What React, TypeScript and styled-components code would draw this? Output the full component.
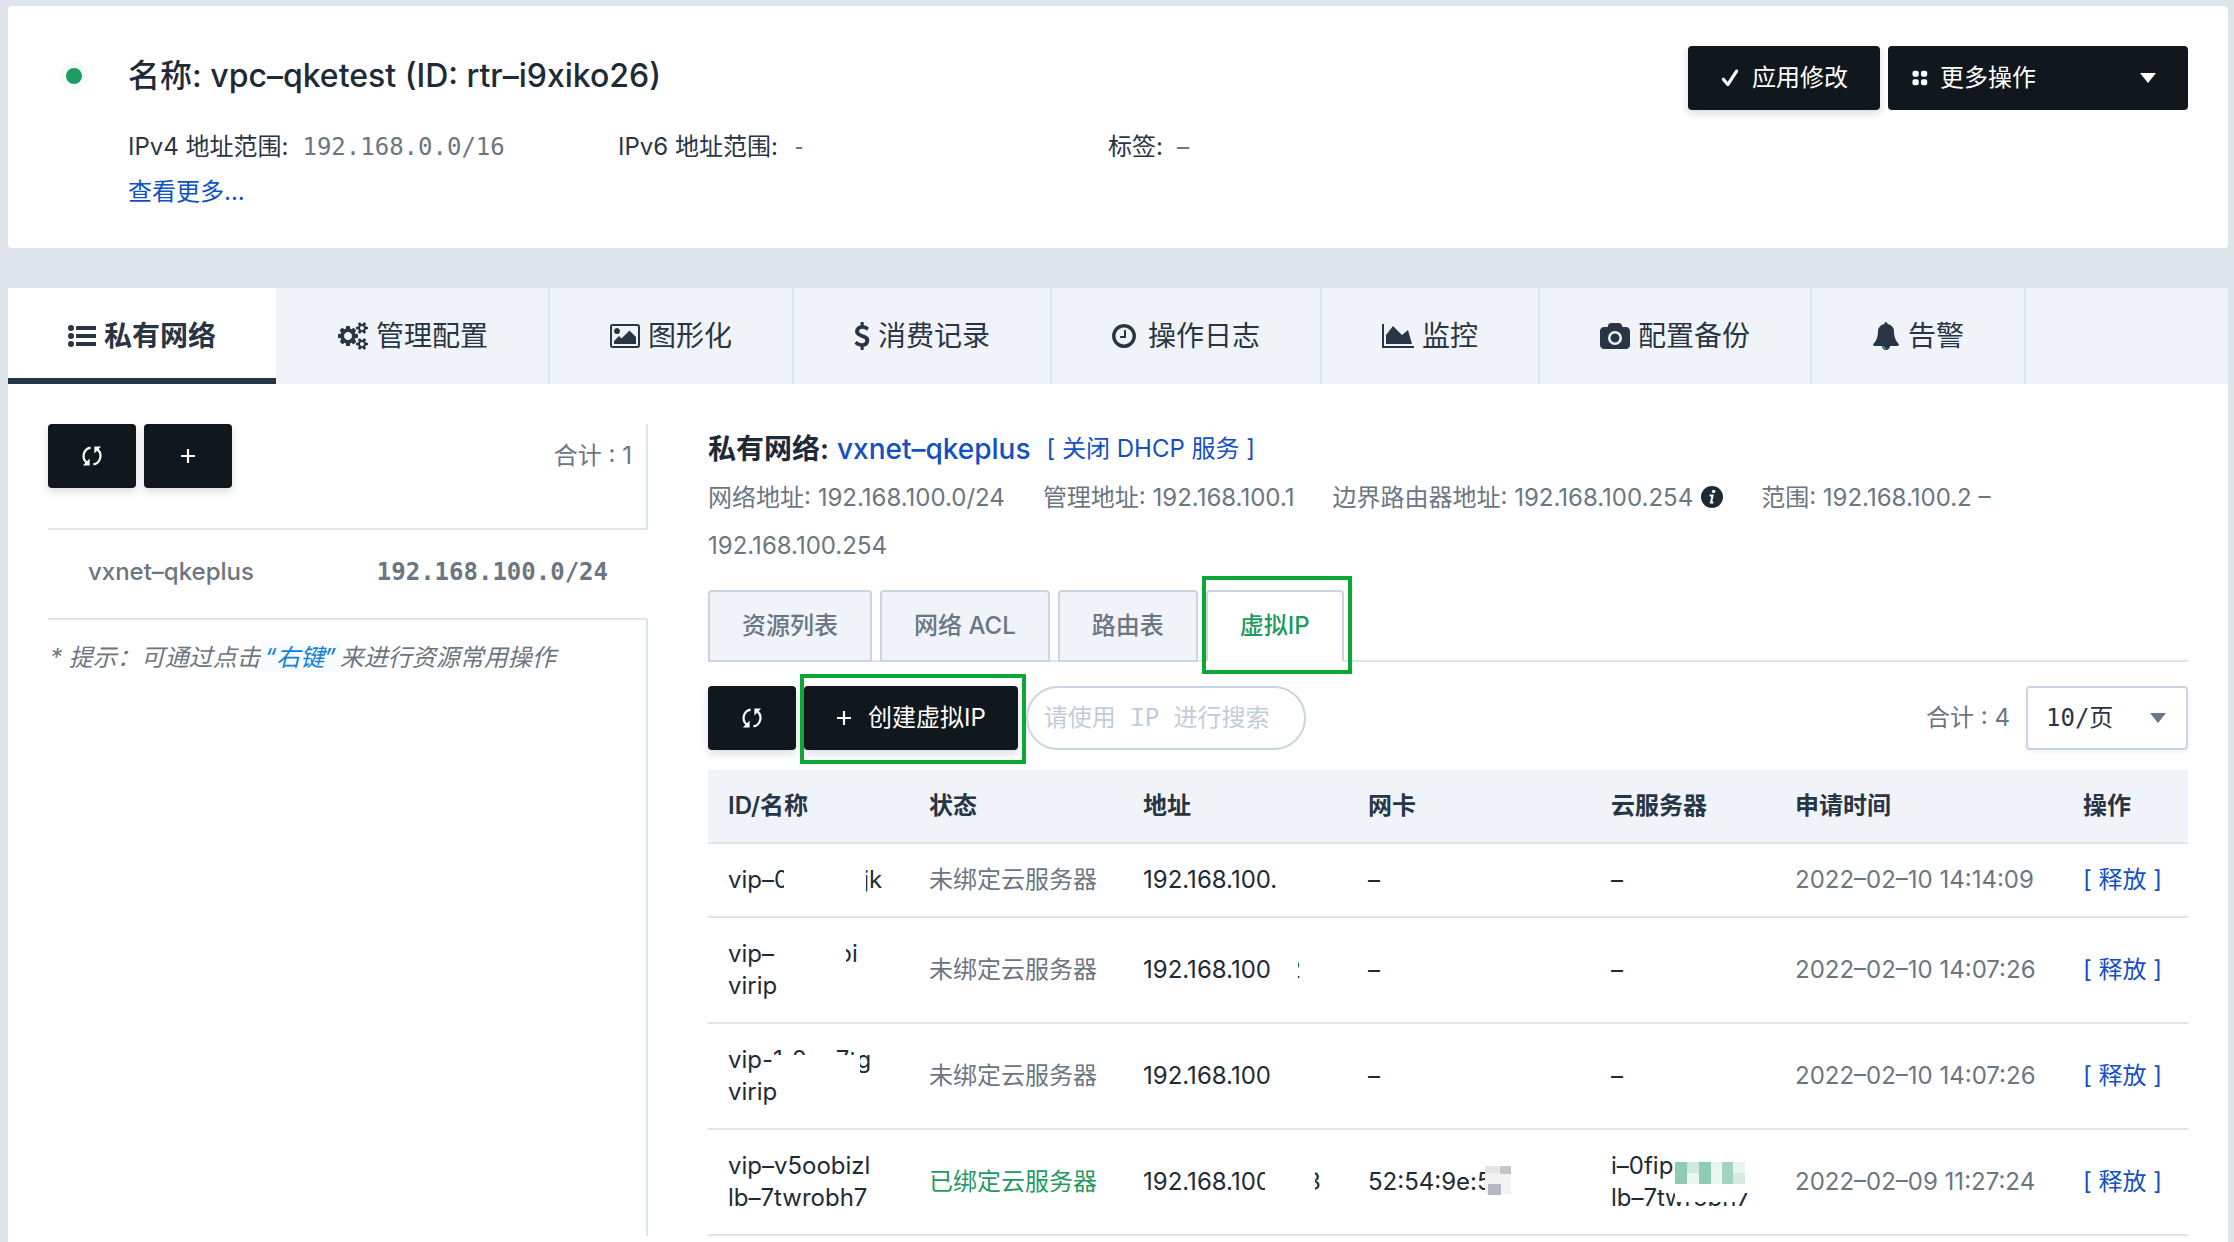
import React from "react";
import styled, { createGlobalStyle, css } from "styled-components";

const sans = `Inter, "Noto Sans CJK SC", sans-serif`;
const mono = `"DejaVu Sans Mono", "Noto Sans CJK SC", monospace`;

const color = {
  page: "#dde4eb",
  panel: "#ffffff",
  soft: "#f0f4f8",
  line: "#dfe5ec",
  edge: "#cbd5e2",
  ink: "#283544",
  strong: "#1e2b37",
  muted: "#6b7683",
  dark: "#10181d",
  link: "#1350c3",
  hint: "#1681d1",
  green: "#1f9a62",
  mark: "#0ba838",
};

const GlobalStyle = createGlobalStyle`
  *, *::before, *::after { box-sizing: border-box; }
  body {
    margin: 0;
    background: ${color.page};
    color: ${color.ink};
    font-family: ${sans};
    font-size: 24px;
    line-height: 32px;
  }
  button, input, select { font: inherit; color: inherit; }
  a { color: ${color.link}; text-decoration: none; }
`;

/* ---------- icons ---------- */

const Icon = styled.svg<{ $w: number; $h?: number }>`
  flex: none;
  display: block;
  width: ${(p) => p.$w}px;
  height: ${(p) => p.$h ?? p.$w}px;
  fill: currentColor;
`;

const ListIcon = () => (
  <Icon $w={28} viewBox="0 0 1792 1792" aria-hidden="true">
    {[384, 896, 1408].map((y) => (
      <g key={y}>
        <circle cx="192" cy={y} r="192" />
        <rect x="512" y={y - 128} width="1280" height="256" rx="32" />
      </g>
    ))}
  </Icon>
);

const CogsIcon = () => (
  <Icon $w={30} $h={28} viewBox="-64 0 1920 1792" aria-hidden="true">
    <path d="M832 896q0-106-75-181t-181-75-181 75-75 181 75 181 181 75 181-75 75-181zm768 512q0-52-38-90t-90-38-90 38-38 90q0 53 37.5 90.5t90.5 37.5 90.5-37.5 37.5-90.5zm0-1024q0-52-38-90t-90-38-90 38-38 90q0 53 37.5 90.5t90.5 37.5 90.5-37.5 37.5-90.5zm-384 421v185q0 10-7 19.5t-16 10.5l-155 24q-11 35-32 76 34 48 90 115 7 11 7 20 0 12-7 19-23 30-82.5 89.5t-78.5 59.5q-11 0-21-7l-115-90q-37 19-77 31-11 108-23 155-7 24-30 24h-186q-11 0-20-7.5t-10-17.5l-23-153q-34-10-75-31l-118 89q-7 7-20 7-11 0-21-8-144-133-144-160 0-9 7-19 10-14 41-53t47-61q-23-44-35-82l-152-24q-10-1-17-9.5t-7-19.5v-185q0-10 7-19.5t16-10.5l155-24q11-35 32-76-34-48-90-115-7-11-7-20 0-12 7-20 22-30 82-89t79-59q11 0 21 7l115 90q34-18 77-32 11-108 23-154 7-24 30-24h186q11 0 20 7.5t10 17.5l23 153q34 10 75 31l118-89q8-7 20-7 11 0 21 8 144 133 144 160 0 8-7 19-12 16-42 54t-45 60q23 48 34 82l152 23q10 2 17 10.5t7 19.5zm640 533v140q0 16-149 31-12 27-30 52 51 113 51 138 0 4-4 7-122 71-124 71-8 0-46-47t-52-68q-20 2-30 2t-30-2q-14 21-52 68t-46 47q-2 0-124-71-4-3-4-7 0-25 51-138-18-25-30-52-149-15-149-31v-140q0-16 149-31 13-29 30-52-51-113-51-138 0-4 4-7 4-2 35-20t59-34 30-16q8 0 46 46.5t52 67.5q20-2 30-2t30 2q51-71 92-112l6-2q4 0 124 70 4 3 4 7 0 25-51 138 17 23 30 52 149 15 149 31zm0-1024v140q0 16-149 31-12 27-30 52 51 113 51 138 0 4-4 7-122 71-124 71-8 0-46-47t-52-68q-20 2-30 2t-30-2q-14 21-52 68t-46 47q-2 0-124-71-4-3-4-7 0-25 51-138-18-25-30-52-149-15-149-31v-140q0-16 149-31 13-29 30-52-51-113-51-138 0-4 4-7 4-2 35-20t59-34 30-16q8 0 46 46.5t52 67.5q20-2 30-2t30 2q51-71 92-112l6-2q4 0 124 70 4 3 4 7 0 25-51 138 17 23 30 52 149 15 149 31z" />
  </Icon>
);

const PictureIcon = () => (
  <Icon $w={30} $h={28} viewBox="-64 0 1920 1792" aria-hidden="true">
    <path d="M576 576q0 80-56 136t-136 56-136-56-56-136 56-136 136-56 136 56 56 136zm1024 384v448h-1408v-192l320-320 160 160 512-512zm96-704h-1600q-13 0-22.5 9.5t-9.5 22.5v1216q0 13 9.5 22.5t22.5 9.5h1600q13 0 22.5-9.5t9.5-22.5v-1216q0-13-9.5-22.5t-22.5-9.5zm160 32v1216q0 66-47 113t-113 47h-1600q-66 0-113-47t-47-113v-1216q0-66 47-113t113-47h1600q66 0 113 47t47 113z" />
  </Icon>
);

const DollarIcon = () => (
  <Icon $w={16} $h={28} viewBox="384 0 1024 1792" aria-hidden="true">
    <path d="M1362 1185q0 153-99.5 263.5t-258.5 136.5v175q0 14-9 23t-23 9h-135q-13 0-22.5-9.5t-9.5-22.5v-175q-66-9-127.5-31t-101.5-44.5-74-48-46.5-37.5-17.5-18q-17-21-2-41l103-135q7-10 23-12 15-2 24 9l2 2q113 99 243 125 37 8 74 8 81 0 142.5-43t61.5-122q0-28-15-53t-33.5-42-58.5-37.5-66-32-80-32.5q-39-16-61.5-25t-61.5-26.5-62.5-31-56.5-35.5-53.5-42.5-43.5-49-35.5-58-21-66.5-8.5-78q0-138 98-242t255-134v-180q0-13 9.5-22.5t22.5-9.5h135q14 0 23 9t9 23v176q57 6 110.5 23t87 33.5 63.5 37.5 39 29 15 14q17 18 5 38l-81 146q-8 15-23 16-14 3-27-7-3-3-14.5-12t-39-26.5-58.5-32-74.5-26-85.5-11.5q-95 0-155 43t-60 111q0 26 8.5 48t29.5 41.5 39.5 33 56 31 60.5 27 70 27.5q53 20 81 31.5t76 35 75.5 42.5 62 50 53 63.5 31.5 76.5 13 94z" />
  </Icon>
);

const ClockIcon = () => (
  <Icon $w={28} viewBox="128 0 1792 1792" aria-hidden="true">
    <path d="M1024 544v448q0 14-9 23t-23 9h-320q-14 0-23-9t-9-23v-64q0-14 9-23t23-9h224v-352q0-14 9-23t23-9h64q14 0 23 9t9 23zm416 352q0-148-73-273t-198-198-273-73-273 73-198 198-73 273 73 273 198 198 273 73 273-73 198-198 73-273zm224 0q0 209-103 385.5t-279.5 279.5-385.5 103-385.5-103-279.5-279.5-103-385.5 103-385.5 279.5-279.5 385.5-103 385.5 103 279.5 279.5 103 385.5z" />
  </Icon>
);

const ChartIcon = () => (
  <Icon $w={32} $h={28} viewBox="0 0 2048 1792" aria-hidden="true">
    <path d="M2048 1536v128h-2048v-1536h128v1408h1920zM1664 512l256 896h-1664v-576l448-576 576 576z" />
  </Icon>
);

const CameraIcon = () => (
  <Icon $w={30} $h={28} viewBox="0 -64 1920 1792" aria-hidden="true">
    <path d="M960 672q119 0 203.5 84.5t84.5 203.5-84.5 203.5-203.5 84.5-203.5-84.5-84.5-203.5 84.5-203.5 203.5-84.5zm704-416q106 0 181 75t75 181v896q0 106-75 181t-181 75h-1408q-106 0-181-75t-75-181v-896q0-106 75-181t181-75h224l51-136q19-49 69.5-84.5t103.5-35.5h512q53 0 103.5 35.5t69.5 84.5l51 136h224zm-704 1152q185 0 316.5-131.5t131.5-316.5-131.5-316.5-316.5-131.5-316.5 131.5-131.5 316.5 131.5 316.5 316.5 131.5z" />
  </Icon>
);

const BellIcon = () => (
  <Icon $w={28} viewBox="0 0 1792 1792" aria-hidden="true">
    <path d="M912 1696q0-16-16-16-59 0-101.5-42.5t-42.5-101.5q0-16-16-16t-16 16q0 73 51.5 124.5t124.5 51.5q16 0 16-16zm816-288q0 52-38 90t-90 38h-448q0 106-75 181t-181 75-181-75-75-181h-448q-52 0-90-38t-38-90q50-42 91-88t85-119.5 74.5-158.5 50-206 19.5-260q0-152 117-282.5t307-158.5q-8-19-8-39 0-40 28-68t68-28 68 28 28 68q0 20-8 39 190 28 307 158.5t117 282.5q0 139 19.5 260t50 206 74.5 158.5 85 119.5 91 88z" />
  </Icon>
);

const CheckIcon = () => (
  <Icon $w={20} viewBox="0 0 20 20" aria-hidden="true">
    <path
      d="M3.4 11.2 7.8 16.6 16.6 3.2"
      fill="none"
      stroke="currentColor"
      strokeWidth="3.2"
      strokeLinecap="round"
      strokeLinejoin="round"
    />
  </Icon>
);

const DotsIcon = () => (
  <Icon $w={16} viewBox="0 0 16 16" aria-hidden="true">
    <rect x="0.5" y="0.8" width="6.2" height="6" rx="2" />
    <rect x="9" y="0.8" width="6.2" height="6" rx="2" />
    <rect x="0.5" y="9.2" width="6.2" height="6" rx="2" />
    <rect x="9" y="9.2" width="6.2" height="6" rx="2" />
  </Icon>
);

const RefreshIcon = () => (
  <Icon $w={24} viewBox="0 0 24 24" aria-hidden="true">
    <g fill="none" stroke="currentColor" strokeWidth="2.2">
      <path d="M10.6 3.6A8.6 8.6 0 0 0 6.6 18.6" />
      <path d="M13.4 20.4A8.6 8.6 0 0 0 17.4 5.4" />
    </g>
    <path d="M9.6 14.6V21.4H2.9z" />
    <path d="M14.4 9.4V2.6H21.1z" />
  </Icon>
);

const PlusIcon = () => (
  <Icon $w={16} viewBox="0 0 16 16" aria-hidden="true">
    <path d="M6.9 1h2.2v5.9H15v2.2H9.1V15H6.9V9.1H1V6.9h5.9z" />
  </Icon>
);

const CaretIcon = () => (
  <Icon $w={16} $h={10} viewBox="0 0 16 10" aria-hidden="true">
    <path d="M0 0h16L8 10z" />
  </Icon>
);

const InfoIcon = styled(Icon)`
  display: inline-block;
  vertical-align: -2px;
  margin-left: 8px;
  color: ${color.strong};
`;

/* ---------- shared parts ---------- */

const Page = styled.div`
  display: flex;
  flex-direction: column;
  gap: 40px;
  min-height: 100vh;
  padding: 6px 6px 0 8px;
`;

const Button = styled.button<{ $square?: boolean }>`
  position: relative;
  display: inline-flex;
  align-items: center;
  justify-content: center;
  gap: 12px;
  height: 64px;
  padding: 0 ${(p) => (p.$square ? 0 : 32)}px;
  ${(p) => p.$square && "width: 88px;"}
  border: 0;
  border-radius: 4px;
  background: ${color.dark};
  color: #fff;
  white-space: nowrap;
  box-shadow: 0 4px 8px rgba(30, 45, 65, 0.16);
  cursor: pointer;
`;

const marked = css`
  &::after {
    content: "";
    position: absolute;
    border: 4px solid ${color.mark};
    pointer-events: none;
  }
`;

/* ---------- header card ---------- */

const Card = styled.header`
  display: grid;
  grid-template-columns: 16px minmax(0, 1fr) auto;
  column-gap: 46px;
  padding: 40px 40px 34px 58px;
  border-radius: 4px;
  background: ${color.panel};
`;

const StatusDot = styled.span`
  width: 16px;
  height: 16px;
  margin-top: 22px;
  border-radius: 50%;
  background: ${color.green};
  box-shadow: 0 0 0 6px #f3fcf8;
`;

const Title = styled.h1`
  margin: 10px 0 28px;
  color: ${color.strong};
  font-size: 32px;
  font-weight: 500;
  line-height: 40px;
`;

const Actions = styled.div`
  display: flex;
  align-items: flex-start;
  gap: 8px;
`;

const MenuButton = styled(Button)`
  justify-content: flex-start;
  width: 300px;
  padding: 0 32px 0 24px;
  box-shadow: none;

  svg:last-child {
    margin-left: auto;
  }
`;

const Facts = styled.dl`
  display: grid;
  grid-template-columns: repeat(4, minmax(0, 490px));
  grid-column: 2 / -1;
  margin: 0;
  line-height: 46px;
`;

const Fact = styled.div`
  display: flex;
  gap: 14px;

  dt,
  dd {
    margin: 0;
  }
`;

const FactValue = styled.dd<{ $mono?: boolean }>`
  color: ${color.muted};
  ${(p) => p.$mono && `font-family: ${mono};`}
`;

const MoreLink = styled.a`
  grid-column: 2 / -1;
  justify-self: start;
  line-height: 44px;
`;

/* ---------- main tabs ---------- */

const Main = styled.main`
  display: flex;
  flex: 1;
  flex-direction: column;
  background: ${color.panel};
`;

const Tabs = styled.nav`
  display: flex;
  background: ${color.soft};
`;

const Tab = styled.button<{ $active?: boolean }>`
  display: flex;
  align-items: center;
  gap: 8px;
  height: 96px;
  padding: 0 60px;
  border: 0;
  border-right: 2px solid ${color.line};
  background: none;
  font-size: 28px;
  white-space: nowrap;
  cursor: pointer;
  ${(p) =>
    p.$active &&
    css`
      padding-top: 6px;
      margin-right: 2px;
      border-right: 0;
      border-bottom: 6px solid ${color.ink};
      background: ${color.panel};
      font-weight: 600;
    `}
`;

/* ---------- side panel ---------- */

const Columns = styled.div`
  display: flex;
  flex: 1;
  gap: 60px;
  padding: 40px 40px 6px;
`;

const Side = styled.aside`
  display: flex;
  flex: none;
  flex-direction: column;
  width: 600px;
`;

const SideBar = styled.div`
  display: flex;
  gap: 8px;
  height: 106px;
  padding-right: 14px;
  border-right: 2px solid ${color.line};
  border-bottom: 2px solid ${color.line};
`;

const Total = styled.span`
  margin-left: auto;
  color: ${color.muted};
  line-height: 64px;
`;

const NetItem = styled.a`
  display: flex;
  align-items: center;
  justify-content: space-between;
  height: 90px;
  padding: 0 40px 4px;
  border-bottom: 2px solid ${color.line};
  && {
    color: ${color.muted};
  }
  font-weight: 500;

  span {
    font-family: ${mono};
    font-weight: 700;
  }
`;

const Hint = styled.p`
  flex: 1;
  margin: 0;
  padding: 22px 0 0 2px;
  border-right: 2px solid ${color.line};
  color: ${color.muted};
  font-style: italic;

  em {
    padding: 0 4px;
    background: #f6fbff;
    color: ${color.hint};
  }
`;

/* ---------- network details ---------- */

const Detail = styled.section`
  flex: 1;
  min-width: 0;
`;

const DetailTitle = styled.h2`
  display: flex;
  align-items: center;
  gap: 8px;
  margin: 0;
  color: ${color.strong};
  font-size: 28px;
  font-weight: 600;
  line-height: 50px;

  a {
    font-weight: 500;
  }
  a:last-child {
    margin-left: 8px;
    font-size: 24px;
    font-weight: 400;
  }
`;

const Meta = styled.p`
  margin: 0 0 20px;
  color: ${color.muted};
  line-height: 48px;

  span {
    margin-right: 38px;
  }
`;

const SubTabs = styled.nav`
  display: flex;
  gap: 8px;
  border-bottom: 2px solid ${color.line};
`;

const SubTab = styled.button<{ $active?: boolean }>`
  position: relative;
  height: 72px;
  margin-bottom: -2px;
  padding: 0 32px;
  border: 2px solid ${color.edge};
  border-radius: 4px 4px 0 0;
  background: ${color.soft};
  color: ${color.muted};
  font-weight: 500;
  cursor: pointer;
  ${(p) =>
    p.$active &&
    css`
      border-bottom-color: ${color.panel};
      background: ${color.panel};
      color: ${color.green};
      ${marked}
      &::after {
        inset: -16px -10px -14px -6px;
      }
    `}
`;

const Toolbar = styled.div`
  display: flex;
  align-items: center;
  gap: 8px;
  margin: 24px 0 20px;
`;

const CreateButton = styled(Button)`
  gap: 16px;
  ${marked}
  &::after {
    inset: -12px -8px -14px -4px;
  }
`;

const Search = styled.input`
  width: 280px;
  height: 64px;
  padding: 0 16px;
  border: 2px solid ${color.edge};
  border-radius: 32px;
  background: none;
  font-family: ${mono};

  &::placeholder {
    color: #c0cddb;
    opacity: 1;
  }
`;

const SelectBox = styled.label`
  display: grid;
  align-items: center;
  width: 162px;
  margin-left: 8px;
  color: ${color.muted};

  select,
  svg {
    grid-area: 1 / 1;
  }
  svg {
    justify-self: end;
    margin-right: 22px;
    pointer-events: none;
  }
`;

const Select = styled.select`
  appearance: none;
  width: 100%;
  height: 64px;
  padding: 0 18px;
  border: 2px solid ${color.edge};
  border-radius: 4px;
  background: ${color.panel};
  color: ${color.ink};
  font-family: ${mono};
  box-shadow: 0 2px 4px rgba(30, 45, 65, 0.06);
`;

/* ---------- table ---------- */

const Table = styled.table`
  width: 100%;
  table-layout: fixed;
  border-collapse: separate;
  border-spacing: 0;
  color: ${color.strong};
`;

const Col = styled.col<{ $w: number }>`
  width: ${(p) => p.$w}px;
`;

const Th = styled.th`
  padding: 20px 0 20px 20px;
  border-bottom: 2px solid ${color.line};
  background: ${color.soft};
  color: ${color.ink};
  font-weight: 600;
  text-align: left;
`;

const Td = styled.td<{ $tone?: string }>`
  padding: 20px 0 20px 20px;
  border-bottom: 2px solid ${color.line};
  color: ${(p) => p.$tone ?? "inherit"};
  white-space: nowrap;
`;

const Line = styled.div`
  display: flex;
  height: 32px;
`;

/* A run of characters of which only one part is left visible. */
const Cut = styled.span<{ $w?: number; $end?: boolean; $clip?: string }>`
  display: flex;
  flex: none;
  justify-content: ${(p) => (p.$end ? "flex-end" : "flex-start")};
  width: ${(p) => (p.$w ? `${p.$w}px` : "auto")};
  overflow: hidden;
  clip-path: ${(p) => p.$clip ?? "none"};
`;

const Blank = styled.span<{ $w: number }>`
  flex: none;
  width: ${(p) => p.$w}px;
`;

const GreyMosaic = () => (
  <Icon $w={26} $h={32} viewBox="0 0 26 32" aria-hidden="true">
    <rect x="0" y="0" width="26" height="28" fill="#f2f2f3" />
    <rect x="0" y="0" width="14" height="7" fill="#e4e4e6" />
    <rect x="15" y="0" width="11" height="8" fill="#c6c7ca" />
    <rect x="3" y="18" width="13" height="11" fill="#b3b8c2" />
  </Icon>
);

const GreenMosaic = () => (
  <Icon $w={70} $h={36} viewBox="0 0 70 36" aria-hidden="true">
    <rect x="0" y="12" width="70" height="22" fill="#eaf6f0" />
    <rect x="12" y="12" width="12" height="11" fill="#cfe8dc" />
    <rect x="0" y="12" width="12" height="22" fill="#8fcbb0" />
    <rect x="24" y="12" width="12" height="22" fill="#90ccb1" />
    <rect x="47" y="12" width="11" height="22" fill="#a2d4bd" />
    <rect x="58" y="23" width="12" height="11" fill="#d5ebe0" />
  </Icon>
);

const tabs = [
  { label: "私有网络", icon: <ListIcon /> },
  { label: "管理配置", icon: <CogsIcon /> },
  { label: "图形化", icon: <PictureIcon /> },
  { label: "消费记录", icon: <DollarIcon /> },
  { label: "操作日志", icon: <ClockIcon /> },
  { label: "监控", icon: <ChartIcon /> },
  { label: "配置备份", icon: <CameraIcon /> },
  { label: "告警", icon: <BellIcon /> },
];

const columns = [
  { label: "ID/名称", width: 201 },
  { label: "状态", width: 214 },
  { label: "地址", width: 225 },
  { label: "网卡", width: 243 },
  { label: "云服务器", width: 184 },
  { label: "申请时间", width: 288 },
  { label: "操作", width: 125 },
];

const rows = [
  {
    id: (
      <Line>
        vip–<Cut $w={10}>0</Cut>
        <Blank $w={82} />
        <Cut $w={3} $end>j</Cut>k
      </Line>
    ),
    bound: false,
    address: <Line>192.168.100.</Line>,
    nic: "–",
    server: "–",
    time: "2022–02–10 14:14:09",
  },
  {
    id: (
      <>
        <Line>
          vip–
          <Blank $w={72} />
          <Cut $w={6} $end>o</Cut>i
        </Line>
        <Line>virip</Line>
      </>
    ),
    bound: false,
    address: (
      <Line>
        192.168.100
        <Blank $w={27} />
        <Cut $w={3} $end>2</Cut>
      </Line>
    ),
    nic: "–",
    server: "–",
    time: "2022–02–10 14:07:26",
  },
  {
    id: (
      <>
        <Line>
          vip-
          <Cut $clip="inset(0 0 21px 0)">1r0oo7t</Cut>
          <Blank $w={3} />
          <Cut $w={11} $end>g</Cut>
        </Line>
        <Line>virip</Line>
      </>
    ),
    bound: false,
    address: <Line>192.168.100</Line>,
    nic: "–",
    server: "–",
    time: "2022–02–10 14:07:26",
  },
  {
    id: (
      <>
        <Line>vip–v5oobizl</Line>
        <Line>lb–7twrobh7</Line>
      </>
    ),
    bound: true,
    address: (
      <Line>
        192.168.10<Cut $w={9}>0</Cut>
        <Blank $w={50} />
        <Cut $w={6} $end>3</Cut>
      </Line>
    ),
    nic: (
      <Line>
        52:54:9e:<Cut $w={8}>5</Cut>
        <GreyMosaic />
      </Line>
    ),
    server: (
      <>
        <Line>
          i–0fip
          <Blank $w={2} />
          <GreenMosaic />
        </Line>
        <Line>
          lb–7t
          <Cut $clip="polygon(0 0, 8px 0, 11px 20px, 100% 20px, 100% 100%, 0 100%)">wrobh</Cut>
          <Cut $clip="inset(11px 0 0 0)">7</Cut>
        </Line>
      </>
    ),
    time: "2022–02–09 11:27:24",
  },
];

export default function App() {
  return (
    <>
      <GlobalStyle />
      <Page>
        <Card>
          <StatusDot />
          <Title>名称: vpc–qketest (ID: rtr–i9xiko26)</Title>
          <Actions>
            <Button type="button">
              <CheckIcon />
              应用修改
            </Button>
            <MenuButton type="button">
              <DotsIcon />
              更多操作
              <CaretIcon />
            </MenuButton>
          </Actions>
          <Facts>
            <Fact>
              <dt>IPv4 地址范围:</dt>
              <FactValue $mono>192.168.0.0/16</FactValue>
            </Fact>
            <Fact>
              <dt>IPv6 地址范围:</dt>
              <FactValue $mono>-</FactValue>
            </Fact>
            <Fact>
              <dt>标签:</dt>
              <FactValue>–</FactValue>
            </Fact>
          </Facts>
          <MoreLink href="#more">查看更多...</MoreLink>
        </Card>

        <Main>
          <Tabs>
            {tabs.map((t, i) => (
              <Tab key={t.label} type="button" $active={i === 0}>
                {t.icon}
                {t.label}
              </Tab>
            ))}
          </Tabs>

          <Columns>
            <Side>
              <SideBar>
                <Button type="button" $square aria-label="刷新">
                  <RefreshIcon />
                </Button>
                <Button type="button" $square aria-label="新建">
                  <PlusIcon />
                </Button>
                <Total>合计 : 1</Total>
              </SideBar>
              <NetItem href="#vxnet">
                vxnet–qkeplus
                <span>192.168.100.0/24</span>
              </NetItem>
              <Hint>
                * 提示：可通过点击<em>“右键”</em>来进行资源常用操作
              </Hint>
            </Side>

            <Detail>
              <DetailTitle>
                私有网络:
                <a href="#vxnet">vxnet–qkeplus</a>
                <a href="#dhcp">[ 关闭 DHCP 服务 ]</a>
              </DetailTitle>
              <Meta>
                <span>网络地址: 192.168.100.0/24</span>
                <span>管理地址: 192.168.100.1</span>
                <span>
                  边界路由器地址: 192.168.100.254
                  <InfoIcon $w={22} viewBox="0 0 22 22" aria-hidden="true">
                    <circle cx="11" cy="11" r="11" />
                    <circle cx="12.6" cy="5.4" r="1.7" fill="#fff" />
                    <path
                      d="M8.6 9.4h3L10 16.6h2.4"
                      fill="none"
                      stroke="#fff"
                      strokeWidth="2"
                    />
                  </InfoIcon>
                </span>
                <span>范围: 192.168.100.2 –</span> <span>192.168.100.254</span>
              </Meta>

              <SubTabs>
                <SubTab type="button">资源列表</SubTab>
                <SubTab type="button">网络 ACL</SubTab>
                <SubTab type="button">路由表</SubTab>
                <SubTab type="button" $active>
                  虚拟IP
                </SubTab>
              </SubTabs>

              <Toolbar>
                <Button type="button" $square aria-label="刷新">
                  <RefreshIcon />
                </Button>
                <CreateButton type="button">
                  <PlusIcon />
                  创建虚拟IP
                </CreateButton>
                <Search type="text" aria-label="搜索" placeholder="请使用 IP 进行搜索" />
                <Total>合计 : 4</Total>
                <SelectBox>
                  <Select aria-label="每页数量" defaultValue="10">
                    <option value="10">10/页</option>
                  </Select>
                  <CaretIcon />
                </SelectBox>
              </Toolbar>

              <Table>
                <colgroup>
                  {columns.map((c) => (
                    <Col key={c.label} $w={c.width} />
                  ))}
                </colgroup>
                <thead>
                  <tr>
                    {columns.map((c) => (
                      <Th key={c.label} scope="col">
                        {c.label}
                      </Th>
                    ))}
                  </tr>
                </thead>
                <tbody>
                  {rows.map((r, i) => (
                    <tr key={i}>
                      <Td>{r.id}</Td>
                      <Td $tone={r.bound ? color.green : color.muted}>
                        {r.bound ? "已绑定云服务器" : "未绑定云服务器"}
                      </Td>
                      <Td>{r.address}</Td>
                      <Td>{r.nic}</Td>
                      <Td>{r.server}</Td>
                      <Td $tone={color.muted}>{r.time}</Td>
                      <Td>
                        <a href="#release">[ 释放 ]</a>
                      </Td>
                    </tr>
                  ))}
                </tbody>
              </Table>
            </Detail>
          </Columns>
        </Main>
      </Page>
    </>
  );
}
